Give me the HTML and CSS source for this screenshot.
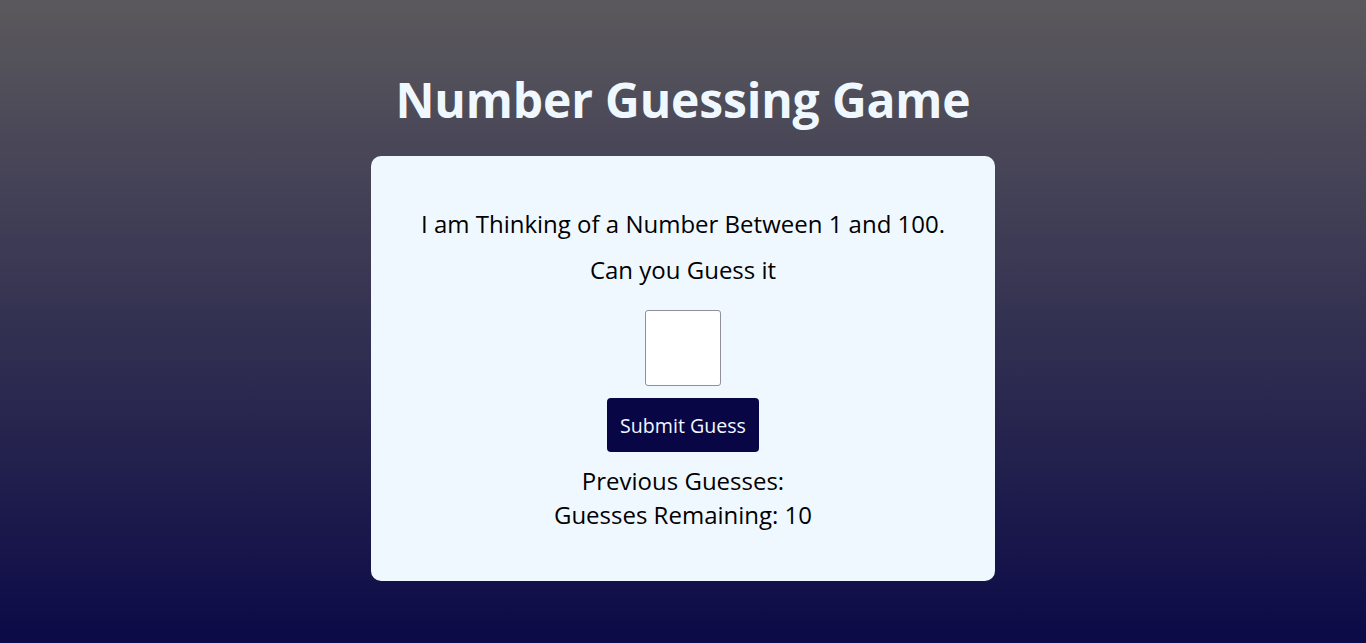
FILE: index.html
```html
<!DOCTYPE html>
<html lang="en">
<head>
<meta charset="utf-8">
<title>Number Guessing Game</title>
<link rel="stylesheet" href="styles.css">
</head>
<body>
<main class="page">
  <h1 class="title">Number Guessing Game</h1>
  <section class="card">
    <p class="line first">I am Thinking of a Number Between 1 and 100.</p>
    <p class="line">Can you Guess it</p>
    <input class="guess-input" type="text" aria-label="Your guess">
    <button class="submit" type="button">Submit Guess</button>
    <div class="stats">
      <div>Previous Guesses:</div>
      <div>Guesses Remaining: 10</div>
    </div>
  </section>
</main>
</body>
</html>
```

FILE: styles.css
```css
html, body {
  margin: 0;
  padding: 0;
  height: 100%;
}
body {
  background: linear-gradient(to bottom, #5b595c 0%, #0c0a47 100%);
  font-family: "Open Sans", "Noto Sans", sans-serif;
  color: #000;
}
.page {
  display: flex;
  flex-direction: column;
  align-items: center;
  padding-top: 68px;
}
.title {
  margin: 0;
  color: #f0f8ff;
  font-size: 48px;
  font-weight: 700;
  line-height: 64px;
  letter-spacing: -0.15px;
}
.card {
  margin-top: 24px;
  width: 624px;
  height: 425px;
  box-sizing: border-box;
  background: #f0f8ff;
  border-radius: 10px;
  display: flex;
  flex-direction: column;
  align-items: center;
  padding-top: 50px;
}
.line {
  margin: 0;
  font-size: 24px;
  line-height: 36px;
}
.line + .line {
  margin-top: 10px;
}
.guess-input {
  margin-top: 22px;
  width: 76px;
  height: 76px;
  box-sizing: border-box;
  border: 1px solid #8f8f9d;
  border-radius: 3px;
  background: #fff;
  padding: 0;
}
.submit {
  margin-top: 12px;
  width: 152px;
  height: 54px;
  border: none;
  border-radius: 4px;
  background: #080645;
  color: #f0f8ff;
  font-family: inherit;
  font-size: 19.6px;
  padding: 0;
}
.stats {
  margin-top: 12px;
  text-align: center;
  font-size: 24px;
  line-height: 34px;
}
```
